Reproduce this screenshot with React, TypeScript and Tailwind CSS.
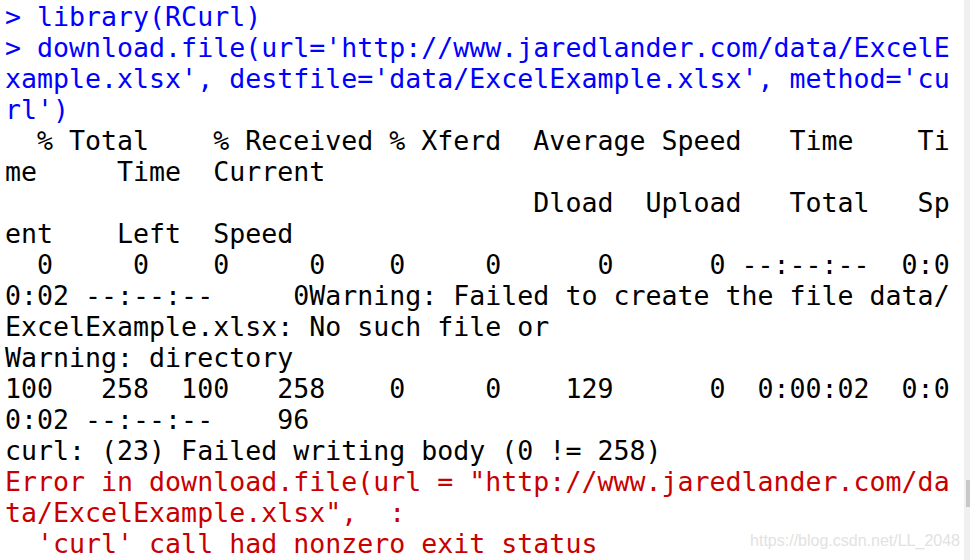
const lines: { text: string; tone: "cmd" | "out" | "err" }[] = [
  { text: "> library(RCurl)", tone: "cmd" },
  { text: "> download.file(url='http://www.jaredlander.com/data/ExcelE", tone: "cmd" },
  { text: "xample.xlsx', destfile='data/ExcelExample.xlsx', method='cu", tone: "cmd" },
  { text: "rl')", tone: "cmd" },
  { text: "  % Total    % Received % Xferd  Average Speed   Time    Ti", tone: "out" },
  { text: "me     Time  Current", tone: "out" },
  { text: "                                 Dload  Upload   Total   Sp", tone: "out" },
  { text: "ent    Left  Speed", tone: "out" },
  { text: "  0     0    0     0    0     0      0      0 --:--:--  0:0", tone: "out" },
  { text: "0:02 --:--:--     0Warning: Failed to create the file data/", tone: "out" },
  { text: "ExcelExample.xlsx: No such file or", tone: "out" },
  { text: "Warning: directory", tone: "out" },
  { text: "100   258  100   258    0     0    129      0  0:00:02  0:0", tone: "out" },
  { text: "0:02 --:--:--    96", tone: "out" },
  { text: "curl: (23) Failed writing body (0 != 258)", tone: "out" },
  { text: 'Error in download.file(url = "http://www.jaredlander.com/da', tone: "err" },
  { text: 'ta/ExcelExample.xlsx",  :', tone: "err" },
  { text: "  'curl' call had nonzero exit status", tone: "err" },
];

const toneClass = {
  cmd: "text-[#0000ff]",
  out: "text-black",
  err: "text-[#c80000]",
};

export default function App() {
  return (
    <div className="relative flex h-[560px] w-[970px] overflow-hidden bg-white">
      <div className="flex-1 pl-[5px] pt-[1px] font-['DejaVu_Sans_Mono',monospace] text-[26.6px] leading-[31px]">
        {lines.map((l, i) => (
          <div key={i} className={`h-[31px] whitespace-pre ${toneClass[l.tone]}`}>
            {l.text}
          </div>
        ))}
      </div>
      <div className="flex w-[6px] flex-col bg-[#f0f0f0] pt-[480px]">
        <div className="ml-[2px] h-[27px] w-[4px] bg-[#c8c8c8]" />
      </div>
      <div className="absolute bottom-[7px] right-[10px] font-['Liberation_Sans',Arial,sans-serif] text-[16px] text-[#e2e2e2]">
        https://blog.csdn.net/LL_2048
      </div>
    </div>
  );
}
